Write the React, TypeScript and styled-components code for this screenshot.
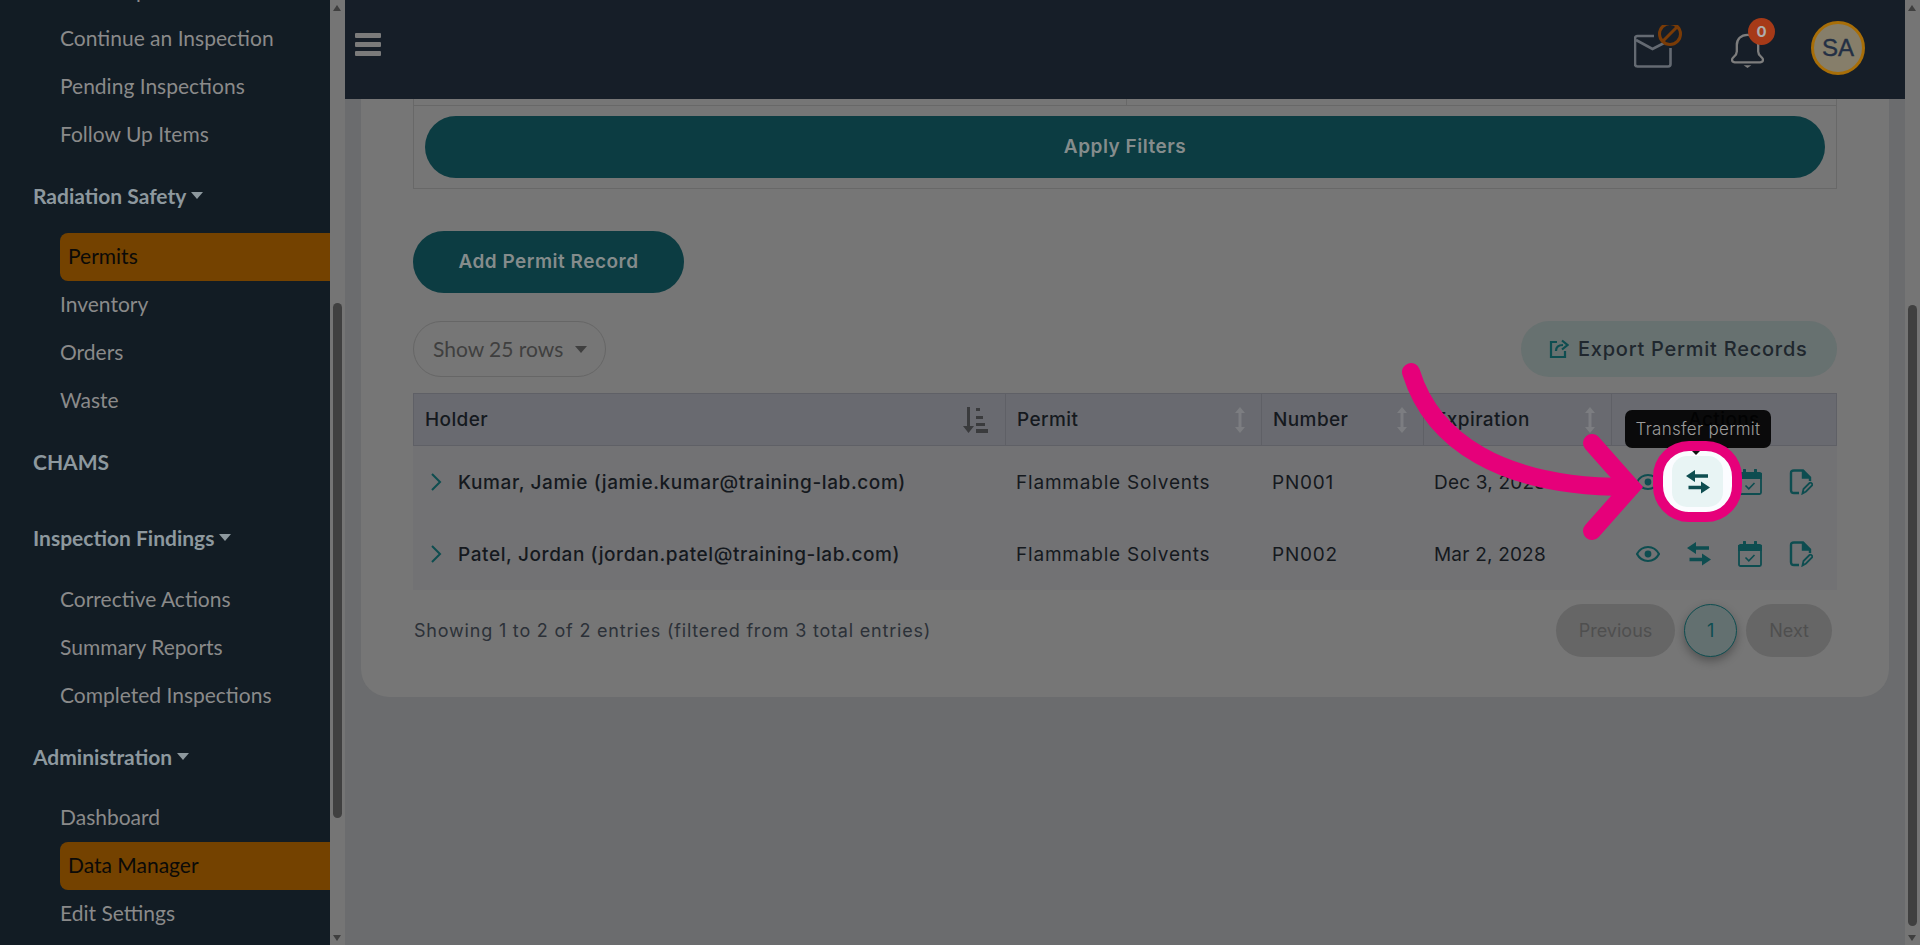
import React from 'react';
import styled, { createGlobalStyle } from 'styled-components';

const BODY_FONT = '"Inter", "Noto Sans", sans-serif';
const NAV_FONT = '"Lato", "Noto Sans", sans-serif';
const TEAL = '#0e4d50';

const GlobalStyle = createGlobalStyle`
  html, body {
    margin: 0;
    height: 100%;
    overflow: hidden;
    background: #6b6c6e;
  }
  * { box-sizing: border-box; }
`;

const Shell = styled.div`
  position: relative;
  display: flex;
  width: 1920px;
  height: 945px;
  overflow: hidden;
  font-family: ${BODY_FONT};
`;

const Sidebar = styled.aside`
  display: flex;
  flex: 0 0 345px;
  height: 100%;
  background: #121c24;
`;

const NavScroll = styled.nav`
  flex: 0 0 330px;
  height: 100%;
  overflow: hidden;
  font-family: ${NAV_FONT};
  font-size: 21px;
`;

const NavInner = styled.div`
  margin-top: -34px;
`;

const NavHeading = styled.div<{ $closed?: boolean }>`
  display: flex;
  align-items: center;
  gap: 5px;
  height: 48px;
  margin: 14px 0 ${p => (p.$closed ? 28 : 12.6)}px 33px;
  padding-bottom: 2px;
  font-weight: 700;
  color: #8d989e;
`;

const NavItem = styled.div<{ $active?: boolean }>`
  display: flex;
  align-items: center;
  height: 48px;
  margin-left: 60px;
  padding-left: ${p => (p.$active ? 8 : 0)}px;
  padding-bottom: 2px;
  border-radius: 8px 0 0 8px;
  color: ${p => (p.$active ? '#0b0a08' : '#8a8a8a')};
  background: ${p => (p.$active ? '#744200' : 'transparent')};
`;

const Caret = styled.span`
  width: 0;
  height: 0;
  border-left: 6.5px solid transparent;
  border-right: 6.5px solid transparent;
  border-top: 7px solid #8d989e;
`;

const Track = styled.div`
  position: relative;
  flex: 0 0 15px;
  height: 100%;
  background: #757575;
`;

const TrackArrow = styled.span<{ $down?: boolean }>`
  position: absolute;
  left: 3px;
  ${p => (p.$down ? 'bottom: 4px;' : 'top: 5px;')}
  width: 0;
  height: 0;
  border-left: 4.5px solid transparent;
  border-right: 4.5px solid transparent;
  ${p => (p.$down ? 'border-top: 6px solid #3f3f3f;' : 'border-bottom: 6px solid #3f3f3f;')}
`;

const Thumb = styled.div<{ $top: number; $height: number }>`
  position: absolute;
  left: 3px;
  top: ${p => p.$top}px;
  width: 9px;
  height: ${p => p.$height}px;
  border-radius: 5px;
  background: #404040;
`;

const Main = styled.main`
  display: flex;
  flex: 1;
  flex-direction: column;
  min-width: 0;
  height: 100%;
  background: #6b6c6e;
`;

const Header = styled.header`
  display: flex;
  flex: 0 0 99px;
  align-items: center;
  padding: 0 40px 0 10px;
  background: #161e28;
`;

const Burger = styled.div`
  display: flex;
  flex-direction: column;
  gap: 4px;
  width: 26px;
  margin-top: -10px;
  span {
    height: 5px;
    border-radius: 1px;
    background: #7b7b7b;
  }
`;

const HeaderIcons = styled.div`
  display: flex;
  align-items: center;
  margin-left: auto;
`;

const IconSlot = styled.div<{ $w: number; $mr: number }>`
  position: relative;
  width: ${p => p.$w}px;
  height: 54px;
  margin-right: ${p => p.$mr}px;
`;

const MailGlyph = styled.svg`
  position: absolute;
  left: 0;
  top: 2px;
`;

const BellGlyph = styled.svg`
  position: absolute;
  left: 0;
  top: 10px;
`;

const Badge = styled.span`
  position: absolute;
  left: 17px;
  top: -5px;
  display: flex;
  align-items: center;
  justify-content: center;
  width: 27px;
  height: 27px;
  border-radius: 50%;
  background: #a63a18;
  color: #aeaeae;
  font-size: 15px;
  font-weight: 700;
`;

const Avatar = styled.div`
  display: flex;
  align-items: center;
  justify-content: center;
  width: 54px;
  height: 54px;
  margin-top: -3px;
  border: 3px solid #a86e08;
  border-radius: 50%;
  background: #867e6a;
  color: #232f44;
  font-family: "Liberation Sans", sans-serif;
  font-size: 24px;
  font-weight: 400;
  -webkit-text-stroke: 0.4px #232f44;
`;

const Content = styled.div`
  flex: 1;
  min-height: 0;
  padding: 0 16px;
  overflow: hidden;
`;

const Card = styled.section`
  display: flow-root;
  height: 598px;
  padding: 0 52px;
  border-radius: 0 0 28px 28px;
  background: #767676;
`;

const FilterStub = styled.div`
  display: grid;
  grid-template-columns: 712px 1fr;
  height: 6px;
  border-left: 1px solid #686868;
  border-right: 1px solid #686868;
  div + div { border-left: 1px solid #686868; }
`;

const FilterBox = styled.div`
  padding: 10px 11px;
  border: 1px solid #686868;
`;

const PillButton = styled.button<{ $wide?: boolean }>`
  display: block;
  width: ${p => (p.$wide ? '100%' : '271px')};
  height: 62px;
  padding-bottom: 2px;
  border: 0;
  border-radius: 31px;
  background: #0c3c42;
  color: #858c8c;
  font-family: ${BODY_FONT};
  font-size: 19px;
  font-weight: 600;
  letter-spacing: 0.5px;
`;

const AddRow = styled.div`
  margin-top: 42px;
`;

const ControlRow = styled.div`
  display: flex;
  align-items: center;
  justify-content: space-between;
  margin-top: 28px;
`;

const RowSelect = styled.div`
  display: flex;
  align-items: center;
  gap: 12px;
  width: 193px;
  height: 56px;
  padding-left: 19px;
  padding-bottom: 2px;
  border: 1px solid #666;
  border-radius: 28px;
  color: #3f3f3f;
  font-family: ${NAV_FONT};
  font-size: 21px;
`;

const SelectCaret = styled.span`
  width: 0;
  height: 0;
  margin-top: 3px;
  border-left: 6.5px solid transparent;
  border-right: 6.5px solid transparent;
  border-top: 7px solid #3f3f3f;
`;

const ExportButton = styled.button`
  display: flex;
  align-items: center;
  gap: 9px;
  height: 56px;
  width: 316px;
  padding-left: 28px;
  padding-bottom: 2px;
  border: 0;
  border-radius: 28px;
  background: #677170;
  color: #20272e;
  font-family: ${BODY_FONT};
  font-size: 20px;
  font-weight: 500;
  letter-spacing: 0.75px;
`;

const Table = styled.div`
  margin-top: 16px;
  background: #727274;
`;

const HeadRow = styled.div`
  display: grid;
  grid-template-columns: 591px 256px 162px 188px 1fr;
  height: 53px;
  border: 1px solid #5f6066;
  background: #696a70;
`;

const HeadCell = styled.div<{ $center?: boolean }>`
  display: flex;
  align-items: center;
  justify-content: ${p => (p.$center ? 'center' : 'space-between')};
  padding: 0 ${p => (p.$center ? 0 : 15)}px 0 ${p => (p.$center ? 0 : 11)}px;
  color: #15191e;
  font-size: 19px;
  font-weight: 500;
  letter-spacing: 0.4px;
  & + & { border-left: 1px solid #5f6066; }
`;

const BodyRow = styled.div`
  display: grid;
  grid-template-columns: 592px 256px 162px 188px 226px;
  align-items: center;
  height: 72px;
  color: #15191e;
  font-size: 19px;
  letter-spacing: 0.8px;
`;

const HolderCell = styled.div`
  display: flex;
  align-items: center;
  gap: 16px;
  padding-left: 17px;
  font-weight: 500;
  letter-spacing: 0.6px;
`;

const PlainCell = styled.div<{ $date?: boolean }>`
  padding-left: 11px;
  letter-spacing: ${p => (p.$date ? 0.2 : 0.8)}px;
`;

const ActionsCell = styled.div`
  display: grid;
  grid-template-columns: 24px 24px 24px 24px;
  justify-content: start;
  column-gap: 27px;
  align-items: center;
  padding-left: 25px;
  svg { display: block; }
`;

const Footer = styled.div`
  display: flex;
  align-items: center;
  justify-content: space-between;
  margin-top: 14px;
  padding: 0 5px 0 1px;
  color: #2c3138;
  font-size: 18px;
`;

const EntryCount = styled.span`
  letter-spacing: 0.8px;
`;

const Pager = styled.div`
  display: flex;
  gap: 9px;
`;

const PagerButton = styled.div<{ $current?: boolean }>`
  display: flex;
  align-items: center;
  justify-content: center;
  height: 53px;
  padding: 0 ${p => (p.$current ? 0 : 23)}px;
  width: ${p => (p.$current ? '53px' : 'auto')};
  border: ${p => (p.$current ? `1px solid ${TEAL}` : '0')};
  border-radius: 27px;
  background: ${p => (p.$current ? '#637070' : '#666666')};
  color: ${p => (p.$current ? TEAL : '#4f4f4f')};
  box-shadow: ${p => (p.$current ? '0 4px 10px rgba(0, 0, 0, 0.3)' : 'none')};
  font-size: 18px;
`;

const Tooltip = styled.div`
  position: absolute;
  left: 1625px;
  top: 410px;
  display: flex;
  align-items: center;
  justify-content: center;
  width: 146px;
  height: 38px;
  border-radius: 7px;
  background: rgba(0, 0, 0, 0.9);
  color: #9c9c9c;
  font-size: 17px;
  font-weight: 300;
  letter-spacing: 0.3px;
`;

const Spotlight = styled.div`
  position: absolute;
  left: 1653px;
  top: 441px;
  display: flex;
  align-items: center;
  justify-content: center;
  width: 89px;
  height: 81px;
  border: 10px solid #e6007a;
  border-radius: 36px;
  background: #fbfcff;
  &::before {
    content: '';
    position: absolute;
    left: 29px;
    top: 0;
    width: 0;
    height: 0;
    border-left: 4px solid transparent;
    border-right: 4px solid transparent;
    border-top: 4px solid #111;
  }
`;

const SpotlightButton = styled.div`
  display: flex;
  align-items: center;
  justify-content: center;
  width: 51px;
  height: 51px;
  border-radius: 15px;
  background: #e8f4f4;
`;

const ArrowLayer = styled.svg`
  position: absolute;
  left: 0;
  top: 0;
  pointer-events: none;
`;

const SortBoth = () => (
  <svg width="12" height="26" viewBox="0 0 12 26" fill="#7c7d81">
    <path d="M6 0 L11 6 H7.5 V20 H11 L6 26 L1 20 H4.5 V6 H1 Z" />
  </svg>
);

const SortDesc = () => (
  <svg width="27" height="26" viewBox="0 0 27 26" fill="#3a3b3d">
    <path d="M4 0 H7 V19 H11 L5.5 26 L0 19 H4 Z" />
    <rect x="13" y="1" width="4" height="3" />
    <rect x="13" y="9" width="7" height="3" />
    <rect x="13" y="16" width="9" height="3" />
    <rect x="13" y="22" width="12" height="4" />
  </svg>
);

const Chevron = () => (
  <svg width="12" height="18" viewBox="0 0 12 18" fill="none" stroke={TEAL} strokeWidth="2">
    <path d="M2 1 L10 9 L2 17" />
  </svg>
);

const EyeIcon = () => (
  <svg width="24" height="24" viewBox="0 0 24 24" fill="none" stroke={TEAL} strokeWidth="2.2">
    <path d="M1 12 C4 6.5 8 5 12 5 C16 5 20 6.5 23 12 C20 17.5 16 19 12 19 C8 19 4 17.5 1 12 Z" />
    <circle cx="12" cy="12" r="3.4" fill={TEAL} stroke="none" />
  </svg>
);

const TransferIcon = () => (
  <svg width="24" height="24" viewBox="0 0 24 24" fill={TEAL}>
    <path d="M0 6 L9 0 V4.3 H22 V7.7 H9 V12 Z" />
    <path d="M24 17.5 L15 11.5 V15.8 H2.5 V19.2 H15 V23.5 Z" />
  </svg>
);

const CalendarIcon = () => (
  <svg width="24" height="26" viewBox="0 0 24 26" fill="none" stroke={TEAL} strokeWidth="1.8">
    <rect x="1" y="4" width="22" height="21" rx="1.5" />
    <path d="M1 5 H23 V9 H1 Z" fill={TEAL} />
    <path d="M6.5 1 V6 M17.5 1 V6" strokeWidth="3" strokeLinecap="round" />
    <path d="M7.5 16.5 L10.8 19.8 L16.5 14" strokeWidth="1.6" />
  </svg>
);

const NoteIcon = () => (
  <svg width="24" height="26" viewBox="0 0 24 26" fill="none" stroke={TEAL} strokeWidth="2.4">
    <path d="M10 24 H5 C3 24 2 23 2 21 V4 C2 2 3 1.5 5 1.5 H14 L21 8.5 V12" />
    <path d="M14 1.5 V8.5 H21" fill={TEAL} />
    <path d="M13.5 24.5 L14.5 20 L20.5 14 C22 13 24 15 23 16.5 L17 22.5 Z" strokeWidth="1.8" />
  </svg>
);

const ExportIcon = () => (
  <svg width="20" height="20" viewBox="0 0 20 20" fill="none" stroke={TEAL} strokeWidth="2.2">
    <path d="M8 3 H2 V18 H16 V12" />
    <path d="M7 12 C7 8 10 6 14 6 M13 1.5 L18.5 6 L13 10.5" />
  </svg>
);

const MailIcon = () => (
  <MailGlyph width="48" height="44" viewBox="0 0 48 44" fill="none">
    <path d="M20 11 H3.5 C2 11 1 12 1 13.5 V39 C1 40.8 2 41.5 3.5 41.5 H34 C35.5 41.5 36.5 40.8 36.5 39 V23" stroke="#646a72" strokeWidth="2.6" />
    <path d="M2 15 L18.5 24 L32 17" stroke="#646a72" strokeWidth="2.6" />
    <circle cx="36" cy="9" r="10.5" stroke="#7a3b06" strokeWidth="3" fill="#161e28" />
    <path d="M29 16 L43 2" stroke="#7a3b06" strokeWidth="3" />
  </MailGlyph>
);

const BellIcon = () => (
  <BellGlyph width="33" height="35" viewBox="0 0 34 38" preserveAspectRatio="none" fill="none" stroke="#7d7d7d" strokeWidth="2.4">
    <path d="M17 2 C10 2 6 7 6 13 V20 C6 25 1 26 1 29 C1 31 3 32 6 32 H28 C31 32 33 31 33 29 C33 26 28 25 28 20 V13 C28 7 24 2 17 2 Z" />
    <path d="M13 35 H21 L17 38 Z" fill="#7d7d7d" stroke="none" />
  </BellGlyph>
);

const rows = [
  { holder: 'Kumar, Jamie (jamie.kumar@training-lab.com)', number: 'PN001', expires: 'Dec 3, 2028' },
  { holder: 'Patel, Jordan (jordan.patel@training-lab.com)', number: 'PN002', expires: 'Mar 2, 2028' },
];

const App: React.FC = () => (
  <Shell>
    <GlobalStyle />
    <Sidebar>
      <NavScroll>
        <NavInner>
          <NavItem>Start Inspection</NavItem>
          <NavItem>Continue an Inspection</NavItem>
          <NavItem>Pending Inspections</NavItem>
          <NavItem>Follow Up Items</NavItem>
          <NavHeading>Radiation Safety <Caret /></NavHeading>
          <NavItem $active>Permits</NavItem>
          <NavItem>Inventory</NavItem>
          <NavItem>Orders</NavItem>
          <NavItem>Waste</NavItem>
          <NavHeading $closed>CHAMS</NavHeading>
          <NavHeading>Inspection Findings <Caret /></NavHeading>
          <NavItem>Corrective Actions</NavItem>
          <NavItem>Summary Reports</NavItem>
          <NavItem>Completed Inspections</NavItem>
          <NavHeading>Administration <Caret /></NavHeading>
          <NavItem>Dashboard</NavItem>
          <NavItem $active>Data Manager</NavItem>
          <NavItem>Edit Settings</NavItem>
        </NavInner>
      </NavScroll>
      <Track>
        <TrackArrow />
        <Thumb $top={303} $height={515} />
        <TrackArrow $down />
      </Track>
    </Sidebar>

    <Main>
      <Header>
        <Burger><span /><span /><span /></Burger>
        <HeaderIcons>
          <IconSlot $w={48} $mr={49}><MailIcon /></IconSlot>
          <IconSlot $w={43} $mr={37}><BellIcon /><Badge>0</Badge></IconSlot>
          <Avatar>SA</Avatar>
        </HeaderIcons>
      </Header>
      <Content>
        <Card>
          <FilterStub><div /><div /></FilterStub>
          <FilterBox>
            <PillButton $wide>Apply Filters</PillButton>
          </FilterBox>
          <AddRow>
            <PillButton>Add Permit Record</PillButton>
          </AddRow>
          <ControlRow>
            <RowSelect>Show 25 rows <SelectCaret /></RowSelect>
            <ExportButton><ExportIcon />Export Permit Records</ExportButton>
          </ControlRow>
          <Table>
            <HeadRow>
              <HeadCell>Holder <SortDesc /></HeadCell>
              <HeadCell>Permit <SortBoth /></HeadCell>
              <HeadCell>Number <SortBoth /></HeadCell>
              <HeadCell>Expiration <SortBoth /></HeadCell>
              <HeadCell $center>Actions</HeadCell>
            </HeadRow>
            {rows.map(row => (
              <BodyRow key={row.number}>
                <HolderCell><Chevron />{row.holder}</HolderCell>
                <PlainCell>Flammable Solvents</PlainCell>
                <PlainCell>{row.number}</PlainCell>
                <PlainCell $date>{row.expires}</PlainCell>
                <ActionsCell>
                  <EyeIcon />
                  <TransferIcon />
                  <CalendarIcon />
                  <NoteIcon />
                </ActionsCell>
              </BodyRow>
            ))}
          </Table>
          <Footer>
            <EntryCount>Showing 1 to 2 of 2 entries (filtered from 3 total entries)</EntryCount>
            <Pager>
              <PagerButton>Previous</PagerButton>
              <PagerButton $current>1</PagerButton>
              <PagerButton>Next</PagerButton>
            </Pager>
          </Footer>
        </Card>
      </Content>
    </Main>

    <Track>
      <TrackArrow />
      <Thumb $top={305} $height={621} />
      <TrackArrow $down />
    </Track>

    <Tooltip>Transfer permit</Tooltip>
    <ArrowLayer width="1920" height="945" viewBox="0 0 1920 945" fill="none" stroke="#e6007a" strokeWidth="18" strokeLinecap="round">
      <path d="M1411 372 C1432 440 1500 488 1631 487" />
      <path d="M1592 443 L1631 487 L1592 531" strokeLinejoin="miter" />
    </ArrowLayer>
    <Spotlight>
      <SpotlightButton><TransferIcon /></SpotlightButton>
    </Spotlight>
  </Shell>
);

export default App;
